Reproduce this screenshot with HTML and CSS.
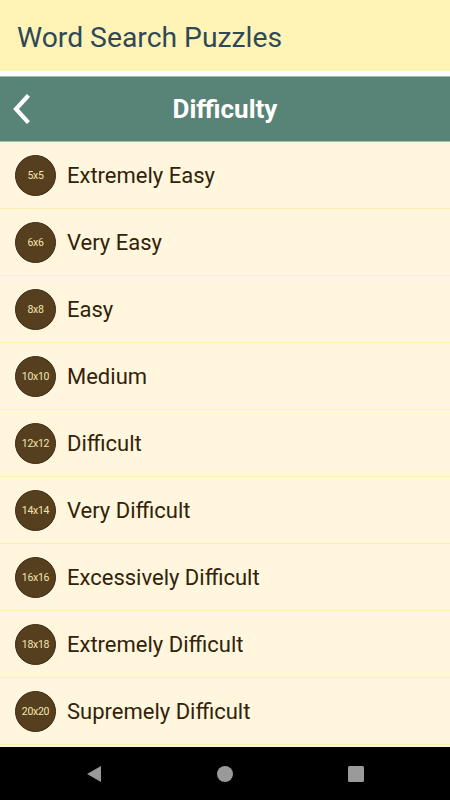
FILE: index.html
```html
<!DOCTYPE html>
<html lang="en">
<head>
    <meta charset="UTF-8">
    <title>Word Search Puzzles</title>
    <link rel="stylesheet" href="styles.css">
</head>
<body>

<header class="app-bar">Word Search Puzzles</header>

<div class="title-bar">
    <button class="back" aria-label="Back">
        <svg width="22" height="30" viewBox="0 0 22 30">
            <path d="M16 3 L5 15 L16 27" fill="none" stroke="#fff" stroke-width="4.2" stroke-linecap="square" stroke-linejoin="miter"/>
        </svg>
    </button>
    <h1>Difficulty</h1>
</div>

<ul class="levels">
    <li><span class="size">5x5</span>Extremely Easy</li>
    <li><span class="size">6x6</span>Very Easy</li>
    <li><span class="size">8x8</span>Easy</li>
    <li><span class="size">10x10</span>Medium</li>
    <li><span class="size">12x12</span>Difficult</li>
    <li><span class="size">14x14</span>Very Difficult</li>
    <li><span class="size">16x16</span>Excessively Difficult</li>
    <li><span class="size">18x18</span>Extremely Difficult</li>
    <li><span class="size">20x20</span>Supremely Difficult</li>
</ul>

<nav class="nav-bar">
    <svg width="18" height="18" viewBox="0 0 18 18"><polygon points="16,1 16,17 2,9" fill="#9a9a9a"/></svg>
    <svg width="18" height="18" viewBox="0 0 18 18"><circle cx="9" cy="9" r="8" fill="#9a9a9a"/></svg>
    <svg width="18" height="18" viewBox="0 0 18 18"><rect x="1" y="1" width="16" height="16" rx="1.5" fill="#9a9a9a"/></svg>
</nav>

</body>
</html>
```

FILE: styles.css
```css
body {
    margin: 0;
    width: 450px;
    height: 800px;
    display: flex;
    flex-direction: column;
    font-family: Roboto, "Liberation Sans", sans-serif;
    background-color: #fff6dd;
    overflow: hidden;
}
.app-bar {
    height: 76px;
    flex-shrink: 0;
    box-sizing: border-box;
    padding: 21px 0 0 17px;
    background-color: #fff4b6;
    color: #2f4858;
    font-size: 28.3px;
    border-bottom: 5px solid #ffffff;
}
.title-bar {
    height: 66px;
    flex-shrink: 0;
    box-sizing: border-box;
    display: flex;
    align-items: center;
    justify-content: center;
    position: relative;
    background-color: #588377;
    border-top: 1px solid #a9b6ae;
    border-bottom: 1px solid #9fbfae;
}
.title-bar h1 {
    margin: 0;
    color: #ffffff;
    font-size: 26px;
    font-weight: bold;
}
.back {
    position: absolute;
    left: 11px;
    top: 17px;
    padding: 0;
    background: none;
    border: none;
    cursor: pointer;
}
.back svg {
    display: block;
}
.levels {
    margin: 0;
    padding: 0;
    list-style-type: none;
    flex: 1;
    background-color: #fff6dd;
}
.levels li {
    height: 66px;
    display: flex;
    align-items: center;
    padding-left: 15px;
    border-bottom: 1px solid #fff0b0;
    color: #33220a;
    font-size: 22px;
}
.size {
    width: 41px;
    height: 41px;
    margin-right: 11px;
    box-sizing: border-box;
    border-radius: 50%;
    border: 1px solid #3a2a12;
    background-color: #553f1f;
    color: #f4e3ac;
    font-size: 10.5px;
    display: flex;
    align-items: center;
    justify-content: center;
    letter-spacing: -0.3px;
}
.nav-bar {
    height: 53px;
    flex-shrink: 0;
    background-color: #000000;
    display: flex;
    align-items: center;
    justify-content: center;
    gap: 113px;
}
```
